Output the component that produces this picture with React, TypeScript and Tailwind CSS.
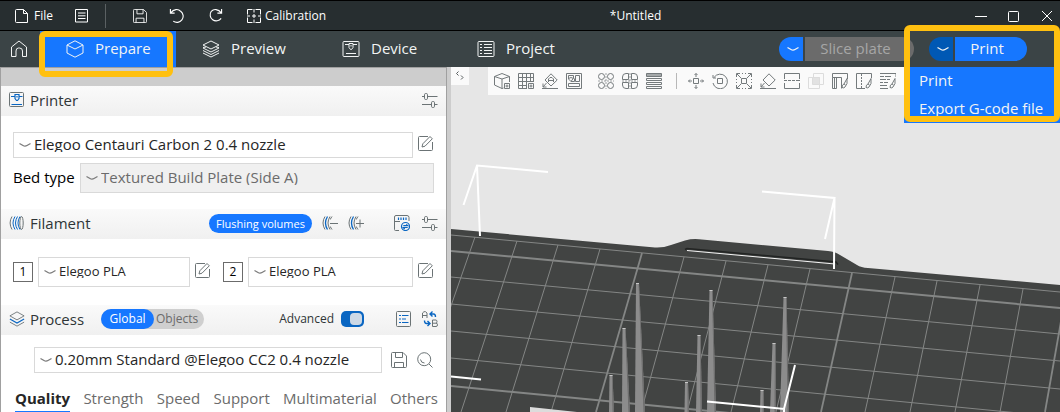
import { useState, type ReactNode } from "react";

type IconProps = { children: ReactNode; className?: string; box?: number };

function Icon({ children, className = "size-4", box = 16 }: IconProps) {
  return (
    <svg
      className={`shrink-0 ${className}`}
      viewBox={`0 0 ${box} ${box}`}
      fill="none"
      stroke="currentColor"
      strokeWidth={1}
      aria-hidden="true"
    >
      {children}
    </svg>
  );
}

/* ---------- shared drawings ---------- */

const chevron = <path d="M.5 4.500L4 6.500Q6 7.700 8 6.500L11.500 4.500" strokeWidth={1.300} />;

const pencil = (
  <>
    <path d="M10 1.500H1.500Q.5 1.500 .5 2.500V14.500Q.5 15.500 1.500 15.500H13.500Q14.500 15.500 14.500 14.500V7" />
    <path d="M4 12l.8-3.200L12 1.500l2.300 2.300L7 11.200z" />
  </>
);

const sliders = (
  <>
    <path d="M0 4.500H2.500M5.500 4.500H15.500M0 12.500H9.500M12.500 12.500H15.500" />
    <rect x="2.500" y="1.500" width="3" height="6" rx="1.200" />
    <rect x="9.500" y="9.500" width="3" height="6" rx="1.200" />
  </>
);

const layers = (
  <>
    <path d="M9 1L17 5L9 9L1 5z" />
    <path d="M1 7.500L4 7M17 7.500L14 7M1 8L9 12L17 8M1 10.500L9 14.500L17 10.500M1 13L9 17L17 13" />
  </>
);

const floppy = (
  <>
    <path d="M.5 1.500Q.5 .5 1.500 .5H12L15.500 4V14.500Q15.500 15.500 14.500 15.500H1.500Q.5 15.500 .5 14.500z" />
    <path d="M4.500 .5V5.500H11.500V.5M3.500 15.500V10.500H12.500V15.500" />
  </>
);

const brush = <path d="M10 14.500q0-3 2-3.500l3-5.500v5l-2 3.500q-1 1.500-3 .5zM12 11l1.500 1" />;

/* ---------- title bar ---------- */

function TitleBar() {
  return (
    <header className="flex h-[31px] items-center border-y border-black bg-[#272e30] text-[12px] text-white">
      <button className="ml-[15px] flex items-center gap-[5px]">
        <Icon className="size-[14px]" box={14}>
          <path d="M1.500 .5H8.500L12.500 4.500V13.500H1.500Q.5 13.500 .5 12.500V1.500Q.5 .5 1.500 .5zM8.500 .5V4.500H12.500" />
        </Icon>
        File
      </button>
      <button className="ml-[22px]" aria-label="Menu">
        <Icon className="size-[14px]" box={14}>
          <path d="M.5 .5H12.500V13H.5zM3 4H10.500M3 6.800H10.500M3 9.500H10.500" />
        </Icon>
      </button>
      <span className="ml-4 h-6 w-px bg-[#5b6163]" />
      <button className="ml-[27px]" aria-label="Save">
        <Icon className="size-[14px]">{floppy}</Icon>
      </button>
      <button className="ml-[22px]" aria-label="Undo">
        <Icon className="size-[15px]">
          <path d="M1.500 1V5.500H6M1.800 5.200C5 .8 10 .8 12.500 3.500A6.200 6.200 0 0 1 4.500 14" strokeWidth={1.200} />
        </Icon>
      </button>
      <button className="ml-[24px]" aria-label="Redo">
        <Icon className="size-[15px]">
          <path d="M14.500 1V5.500H10M14.200 5.200C11 .8 6 .8 3.500 3.500A6.200 6.200 0 1 0 14 11" strokeWidth={1.200} />
        </Icon>
      </button>
      <button className="ml-[24px] flex items-center gap-1">
        <Icon className="size-[14px]" box={14}>
          <path d="M5.500 .5H.5V5.500M8.500 .5H13.500V5.500M.5 8.500V13.500H5.500M13.500 8.500V13.500H8.500M7 0V3.500M7 10.500V14M0 7H3M11 7H14M5 7H9M7 5V9" />
        </Icon>
        Calibration
      </button>
      <span className="flex-1 pr-[30px] text-center">*Untitled</span>
      <div className="flex items-center gap-[21px] pr-[7px]">
        <button aria-label="Minimize">
          <Icon className="size-3" box={12}><path d="M0 6.500H12" /></Icon>
        </button>
        <button aria-label="Maximize">
          <Icon className="size-3" box={12}><rect x=".5" y="1.500" width="10" height="10" rx="1" /></Icon>
        </button>
        <button aria-label="Close">
          <Icon className="size-3" box={12}><path d="M1 1L11 11M11 1L1 11" /></Icon>
        </button>
      </div>
    </header>
  );
}

/* ---------- main navigation ---------- */

const tabs = [
  {
    label: "Prepare",
    width: "w-[136px]",
    icon: <path d="M9 .8L17 5V13L9 17.200L1 13V5zM1 5L9 9L17 5" />,
  },
  { label: "Preview", width: "w-[140px]", icon: layers },
  {
    label: "Device",
    width: "w-[135px]",
    icon: (
      <>
        <rect x="1" y="1.500" width="16" height="15" rx="1" />
        <path d="M3 4.500H7M11 4.500H15M4 13.500H14M7 3.500H11V7.500L9.500 9.500H8.500L7 7.500zM9 5V6.500" />
      </>
    ),
  },
  {
    label: "Project",
    width: "w-[135px]",
    icon: (
      <>
        <rect x="1" y="1.500" width="16" height="15" rx="1" />
        <path d="M3 4.500H5M7 4.500H15M3 7.500H5M7 7.500H15M3 10.500H5M7 10.500H15M3 13.500H5M7 13.500H15" />
      </>
    ),
  },
];

function NavBar() {
  const [active, setActive] = useState("Prepare");
  return (
    <nav className="relative z-10 flex h-9 items-stretch bg-[#3b4446] text-[15px] text-[#f2f4f4]">
      <button className="w-10 pl-[10px]" aria-label="Home">
        <Icon className="size-[18px]" box={18}>
          <path d="M1.500 7L9 1L16.500 7V16.500H12.500V11Q12.500 8 9.500 8H8.500Q6 8 6 11V16.500H1.500z" />
        </Icon>
      </button>
      {tabs.map((tab) => (
        <button
          key={tab.label}
          onClick={() => setActive(tab.label)}
          className={`relative flex items-center gap-[11px] pb-px pl-[26px] ${tab.width} ${active === tab.label ? "bg-[#1677ff]" : ""}`}
        >
          <Icon className="size-[18px]" box={18}>{tab.icon}</Icon>
          {tab.label}
          {tab.label === "Prepare" && (
            <span className="absolute top-0 -left-px h-[46px] w-[134px] rounded-md border-6 border-[#ffc010]" />
          )}
        </button>
      ))}
      <div className="ml-auto flex items-center gap-[15px] pr-[33px]">
        <div className="flex h-6 gap-[2px]">
          <button className="flex w-6 items-center justify-center rounded-l-full bg-[#1677ff] pl-1" aria-label="Slice options">
            <Icon className="size-3" box={12}>{chevron}</Icon>
          </button>
          <button className="w-[109px] rounded-r-full bg-[#6b6b6b] pr-2 pb-px text-[#a6a6a6]" disabled>
            Slice plate
          </button>
        </div>
        <div className="flex h-6 gap-[2px]">
          <button className="flex w-6 items-center justify-center rounded-l-full bg-[#0058b4] pl-1" aria-label="Print options">
            <Icon className="size-3" box={12}>{chevron}</Icon>
          </button>
          <button className="w-[72px] rounded-r-full bg-[#1677ff] pr-2 pb-px">Print</button>
        </div>
      </div>
      <div className="absolute top-9 right-0 flex h-14 w-[156px] flex-col bg-[#1677ff] pl-[15px]">
        <button className="h-7 pb-[2px] text-left">Print</button>
        <button className="h-7 pb-[2px] text-left whitespace-nowrap">Export G-code file</button>
      </div>
      <span className="pointer-events-none absolute -top-[6px] right-0 h-[97px] w-[156px] rounded-md border-6 border-[#ffc010]" />
    </nav>
  );
}

/* ---------- sidebar ---------- */

type PickerProps = { label: string; value: string; className?: string; disabled?: boolean };

function Picker({ label, value, className = "", disabled }: PickerProps) {
  return (
    <div className={`relative ${className}`}>
      <select
        aria-label={label}
        disabled={disabled}
        className="size-full appearance-none border border-[#d9d9d9] bg-white pb-[2px] pl-5 text-[#262626] disabled:bg-[#f0f0f0] disabled:text-[#6b6b6b] disabled:opacity-100"
      >
        <option>{value}</option>
      </select>
      <span className="pointer-events-none absolute inset-y-0 left-[6px] flex items-center text-[#7c7c7c]">
        <Icon className="size-3" box={12}>{chevron}</Icon>
      </span>
    </div>
  );
}

function SectionHeader({ icon, title, children }: { icon: ReactNode; title: string; children: ReactNode }) {
  return (
    <div className="flex h-[30px] items-center bg-linear-to-b from-[#fafafa] to-[#f0f0f0] pr-2 pb-[2px] pl-2 text-[#6b7375]">
      {icon}
      <h2 className="ml-[5px] text-[15px] text-[#2f3537]">{title}</h2>
      {children}
    </div>
  );
}

function IconButton({ label, children, className = "" }: { label: string; children: ReactNode; className?: string }) {
  return (
    <button aria-label={label} className={`shrink-0 text-[#6b7375] ${className}`}>
      <Icon>{children}</Icon>
    </button>
  );
}

const printerIcon = (
  <Icon>
    <rect x=".5" y=".5" width="14" height="14" rx="1" />
    <path d="M2 4.500H6M10 4.500H13.500M2.500 12.500H13M6 2.500H10V6.500L8.500 8.500H7.500L6 6.500zM8 4V5.500" stroke="#0a66c2" strokeWidth={1.200} />
  </Icon>
);

const filamentIcon = (
  <Icon>
    <ellipse cx="12.500" cy="8" rx="1.700" ry="6.500" />
    <path d="M3 1.500Q-.8 8 3 14.500" />
    <path d="M6 1.500Q2 8 6 14.500M8.500 1.500Q4.500 8 8.500 14.500M11 1.500Q7 8 11 14.500" stroke="#0a66c2" />
  </Icon>
);

const processIcon = (
  <Icon box={18}>
    <path d="M9 1L17 5.500L9 10L1 5.500zM1 12.500L9 17L17 12.500" />
    <path d="M1 9L9 13.500L17 9" stroke="#0a66c2" strokeWidth={1.300} />
  </Icon>
);

const spool = (
  <>
    <path d="M3 1.500Q-1 8 3 14.500M8 1.500Q4 8 8 14.500" />
    <path d="M5.500 1.500Q1.500 8 5.500 14.500" stroke="#0a66c2" strokeWidth={1.300} />
    <path d="M10 1.500Q8.800 3 8.300 4.500M8.300 11.500Q8.800 13 10 14.500" />
  </>
);

function Filament({ slot, grow }: { slot: number; grow: string }) {
  return (
    <div className={`flex items-center ${grow}`}>
      <span className="flex size-5 items-center justify-center border border-[#6b6b6b] text-[12px] text-black">{slot}</span>
      <Picker label={`Filament ${slot}`} value="Elegoo PLA" className="ml-[5px] h-[30px] flex-1 text-[13px]" />
      <IconButton label={`Edit filament ${slot}`} className="ml-[5px] -mt-1">{pencil}</IconButton>
    </div>
  );
}

const settingTabs = ["Quality", "Strength", "Speed", "Support", "Multimaterial", "Others"];

function Sidebar() {
  const [advanced, setAdvanced] = useState(true);
  return (
    <aside className="w-[451px] shrink-0 border-r-4 border-[#cdcdcd] bg-white text-[15px]">
      <div className="h-full border-x border-[#a0a0a0]">
        <div className="h-[19px] border-t border-[#a0a0a0] bg-[#cdcdcd]" />
        <SectionHeader icon={printerIcon} title="Printer">
          <IconButton label="Printer settings" className="ml-auto">{sliders}</IconButton>
        </SectionHeader>
        <div className="flex flex-col gap-[5px] pt-4 pr-3 pl-3">
          <div className="flex items-center gap-[5px]">
            <Picker label="Printer" value="Elegoo Centauri Carbon 2 0.4 nozzle" className="h-[26px] flex-1" />
            <IconButton label="Edit printer" className="-mt-1">{pencil}</IconButton>
          </div>
          <div className="flex items-center gap-[5px]">
            <span className="w-[62px] pb-[2px] whitespace-nowrap text-black">Bed type</span>
            <Picker label="Bed type" value="Textured Build Plate (Side A)" className="h-[30px] flex-1" disabled />
          </div>
        </div>
        <div className="h-4" />
        <SectionHeader icon={filamentIcon} title="Filament">
          <button className="ml-auto h-[19px] w-[103px] rounded-full bg-[#1677ff] text-[11px] leading-none whitespace-nowrap text-white">
            Flushing volumes
          </button>
          <IconButton label="Remove filament" className="ml-[10px]">
            {spool}
            <path d="M8 8.500H16" />
          </IconButton>
          <IconButton label="Add filament" className="ml-[10px]">
            {spool}
            <path d="M8 8.500H16M12 4.500V12.500" />
          </IconButton>
          <IconButton label="Sync filaments" className="ml-[30px]">
            <path d="M5 15.500H1.500Q.5 15.500 .5 14.500V2Q.5 .5 2 .5H13Q15 .5 15 2.500V6M.5 6.500H6" />
            <g stroke="#0a66c2" strokeWidth={1.200}>
              <path d="M4.500 2.500V5M7 2.500V5M9.500 2.500V5M12 2.500V5" />
              <circle cx="11.500" cy="11.500" r="4" />
              <path d="M9.300 10.700H13.700L12.300 9.300M13.700 12.500H9.300L10.700 14" />
            </g>
          </IconButton>
          <IconButton label="Filament settings" className="ml-3">{sliders}</IconButton>
        </SectionHeader>
        <div className="flex gap-3 py-[18px] pr-3 pl-3">
          <Filament slot={1} grow="w-[198px]" />
          <Filament slot={2} grow="flex-1" />
        </div>
        <SectionHeader icon={processIcon} title="Process">
          <div className="ml-[17px] flex h-5 items-center rounded-full bg-[#cfcfcf] text-[12px]">
            <button className="h-5 w-[53px] rounded-full bg-[#1677ff] text-white">Global</button>
            <button className="w-[50px] pr-1 text-[#6b6b6b]">Objects</button>
          </div>
          <label htmlFor="advanced" className="ml-auto text-[12px] text-[#2f3537]">Advanced</label>
          <span className="relative ml-[7px] flex h-4 w-[23px]">
            <input
              id="advanced"
              type="checkbox"
              checked={advanced}
              onChange={(e) => setAdvanced(e.target.checked)}
              className="peer size-full appearance-none rounded-[5px] bg-[#a0a0a0] checked:bg-[#0a66c2]"
            />
            <span className="pointer-events-none absolute top-[2px] left-[2px] size-3 rounded-[4px] bg-[#cdd9e6] peer-checked:left-[9px]" />
          </span>
          <IconButton label="Parameter list" className="ml-8">
            <rect x=".5" y=".5" width="14" height="15" rx="1" />
            <path d="M3 4.500H5M6 4.500H12.500M3 8H5M6 8H10M3 11.500H5M6 11.500H12.500" stroke="#0a66c2" strokeWidth={1.200} />
          </IconButton>
          <IconButton label="Compare presets" className="ml-[10px]">
            <path d="M.5 7V2L2 .7H3.500L5 2V7M.5 4.500H5M10.500 9V15.500H14Q15.500 15.500 15.500 13.800T14 12.200H10.500M14 12.200Q15 12 15 10.600T14 9H10.500" />
            <path d="M10.500 .5L8 3L10.500 5.500M8.500 3H11.500Q13.500 3 13.500 6M5.500 10L8 12.500L5.500 15M7.500 12.500H4.500Q2.500 12.500 2.500 9.500" stroke="#0a66c2" strokeWidth={1.400} />
          </IconButton>
        </SectionHeader>
        <div className="flex items-center pt-3 pr-[13px] pl-[33px]">
          <Picker label="Process preset" value="0.20mm Standard @Elegoo CC2 0.4 nozzle" className="h-[26px] flex-1" />
          <IconButton label="Save preset" className="ml-[9px]">{floppy}</IconButton>
          <IconButton label="Search settings" className="ml-[10px]">
            <circle cx="7.200" cy="7.200" r="6.500" />
            <path d="M12 12L15.500 15.500M3.500 7.500Q4 11 7.500 11" />
          </IconButton>
        </div>
        <div className="flex justify-between pt-[14px] pr-2 pl-[14px] text-[#6b6b6b]" role="tablist">
          {settingTabs.map((name) => (
            <button
              key={name}
              role="tab"
              aria-selected={name === "Quality"}
              className={`h-[26px] border-b-2 pb-px ${name === "Quality" ? "border-[#1677ff] font-bold text-[#262626]" : "border-transparent"}`}
            >
              {name}
            </button>
          ))}
        </div>
      </div>
    </aside>
  );
}

/* ---------- 3D view ---------- */

const tools: { label: string; gap: string; faded?: boolean; icon: ReactNode }[] = [
  { label: "Add model", gap: "", icon: <path d="M9.500 15L8 15.500L.5 12V3.500L8 .5L15.500 3.500V9M.5 3.500L8 6L15.500 3.500M8 6V15.500M10.500 10.500H15.500V15.500H10.500zM13 11.500V14.500M11.500 13H14.500" /> },
  { label: "Add plate", gap: "ml-2", icon: <path d="M9 15.500H.5V.5H15.500V9M4.500 .5V15.500M8.500 .5V15.500M12.500 .5V9M.5 4.500H15.500M.5 8.500H15.500M.5 12.500H9M10.500 10.500H15.500V15.500H10.500zM13 11.500V14.500M11.500 13H14.500" /> },
  { label: "Auto orient", gap: "ml-2", icon: <path d="M9 .8L15.200 7L9 13L3 7zM6.500 9V6L8 4.500H10L11.500 6V9M6.500 7.500H11.500M0 15.500H16M4.500 10L1 14M1 10.500V14H4.500" /> },
  { label: "Arrange", gap: "ml-2", icon: <path d="M.5 .5H15.500V15.500H.5zM2.500 10.500H13.500V13.500H2.500zM9.500 2.500H13.500V8.500H9.500zM2.500 2.500H7.500V5L5 8.500L2.500 6zM5 8.500H8.500V5.500M2.500 5.500L5 4.500L7.500 5.500" /> },
  {
    label: "Split to objects",
    gap: "ml-4",
    icon: (
      <>
        <circle cx="3.500" cy="3.500" r="3" /><circle cx="12.500" cy="3.500" r="3" />
        <circle cx="3.500" cy="12.500" r="3" /><circle cx="12.500" cy="12.500" r="3" />
        <path d="M8 0V16M0 8H16" strokeDasharray="2 1" strokeWidth={0.700} />
      </>
    ),
  },
  {
    label: "Split to parts",
    gap: "ml-2",
    icon: (
      <>
        <path d="M6.500 .5V6.500H.5V4Q.5 .5 4 .5zM9.500 .5V6.500H15.500V4Q15.500 .5 12 .5zM6.500 15.500V9.500H.5V12Q.5 15.500 4 15.500zM9.500 15.500V9.500H15.500V12Q15.500 15.500 12 15.500z" />
        <path d="M8 0V16M0 8H16" strokeDasharray="2 1" strokeWidth={0.700} />
      </>
    ),
  },
  {
    label: "Variable layer height",
    gap: "ml-2",
    icon: (
      <>
        <path d="M.5 .5H15.500V3.500H.5z" fill="#a5a9aa" />
        <path d="M.5 5.500H15.500V7.500H.5zM.5 9.500H15.500V11.500H.5zM.5 13.500H15.500V15.500H.5z" />
      </>
    ),
  },
  { label: "Move", gap: "ml-[11px]", icon: <path d="M5.500 5.500H10.500V10.500H5.500zM8 4V.5M6.500 2L8 .5L9.500 2M8 12V15.500M6.500 14L8 15.500L9.500 14M4 8H.5M2 6.500L.5 8L2 9.500M12 8H15.500M14 6.500L15.500 8L14 9.500" /> },
  { label: "Rotate", gap: "ml-2", icon: <path d="M5.500 5.500H10.500V10.500H5.500zM1 2V5H4M2 4.500A7.300 7.300 0 1 1 1 10" /> },
  { label: "Scale", gap: "ml-2", icon: <path d="M5.500 5.500H10.500V10.500H5.500zM.5 4V.5H4M12 .5H15.500V4M.5 12V15.500H4M12 15.500H15.500V12M1 1L5 5M15 1L11 5M1 15L5 11M15 15L11 11M6 .5H7M9 .5H10M6 15.500H7M9 15.500H10M.5 6V7M.5 9V10M15.500 6V7M15.500 9V10" /> },
  { label: "Lay on face", gap: "ml-2", icon: <path d="M9 .8L15.200 7L9 13L3 7zM0 15.500H16M4.500 10L1 14M1 10.500V14H4.500" /> },
  { label: "Cut", gap: "ml-2", icon: <path d="M.5 6V.5H15.500V6M.5 10V15.500H15.500V10M0 7.500H3M4 7.500H7M8 7.500H11M12 7.500H16" /> },
  {
    label: "Boolean",
    gap: "ml-2",
    faded: true,
    icon: (
      <>
        <path d="M.5 4.500H11.500V15.500H.5zM5.500 .5H15.500V11.500H5.500z" />
        <path d="M4.500 4.500H11.500V11.500H4.500z" fill="#e2e2e2" />
      </>
    ),
  },
  { label: "Support painting", gap: "ml-2", icon: <><path d="M.5 .5H15.500V6M.5 .5V4.500H9.500V15.500M.5 4.500V15.500M2.500 4.500V15.500M4.500 4.500V15.500M.5 15.500H4.500" />{brush}</> },
  { label: "Seam painting", gap: "ml-2", icon: <><path d="M15.500 5V.5H.5V15.500H9" /><path d="M5.500 1V15" strokeDasharray="2 1" />{brush}</> },
  { label: "Fuzzy skin", gap: "ml-2", icon: <><path d="M0 .5H16V4M0 3.500H4M5 3.500H11M0 6.500H6M7 6.500H10M0 9.500H3M4 9.500H8M0 12.500H7M0 15.500H8" />{brush}</> },
];

const gridRows = [
  { y1: 235, y2: 292 },
  { y1: 251, y2: 308, major: true },
  { y1: 277, y2: 334 },
  { y1: 304, y2: 361 },
  { y1: 331, y2: 389 },
  { y1: 358, y2: 417 },
  { y1: 386, y2: 445, major: true },
];

const gridCols = [
  [475, 237, 414], [517, 241, 461], [558, 245, 506], [600, 249, 551], [642, 253, 596],
  [684, 257, 641], [726, 261, 687], [768, 265, 731], [810, 269, 776], [852, 273, 821],
  [895, 277, 865], [937, 281, 910], [980, 285, 955], [1023, 289, 1000], [1066, 293, 1045],
];

// tip x, tip y, left and right foot at the bottom edge
const spikes = [
  [637.500, 283, 635, 645], [624, 328, 622, 630], [611, 375, 609, 614],
  [711, 290, 707, 716], [699, 335, 696, 702], [686.500, 382, 684.500, 689],
  [785, 297, 780, 789], [774, 343, 770, 776], [762, 390, 760, 764],
];

function Scene() {
  return (
    <svg className="absolute inset-0 size-full" viewBox="451 67 609 345" preserveAspectRatio="xMinYMin slice" role="img" aria-label="Build plate">
      <path d="M451 229L655 247.500Q663 248 671 245L685 240.500Q692 238.500 699 239.200L828 251Q835 251.500 840 255L857 265Q861 267.500 868 268L1060 285V412H451z" fill="#424443" />
      <path d="M685 249.500L687 248.500L836 262L838 264.500" fill="none" stroke="#222423" strokeWidth={1.500} />
      <path d="M687 250.500L835 264" stroke="#f5f5f5" strokeWidth={1} />
      <g stroke="#848685">
        {gridRows.map((r) => (
          <line key={r.y1} x1={451} y1={r.y1} x2={1060} y2={r.y2} strokeWidth={r.major ? 2 : 1} />
        ))}
        {gridCols.map(([x, y, foot], i) => (
          <line key={x} x1={x} y1={y} x2={foot} y2={412} strokeWidth={i % 5 === 4 ? 1.800 : 1} />
        ))}
      </g>
      {spikes.map(([x, y, left, right]) => (
        <g key={x}>
          <path d={`M${x - 1.500} ${y}H${x + 1.500}L${right} 412H${left}z`} fill="#8c8c8c" />
          <path d={`M${x + 1} ${y}H${x + 1.500}L${right} 412H${right - 1.500}z`} fill="#6c6c6c" />
          <path d={`M${x - 1.500} ${y + 0.500}H${x + 1.500}`} stroke="#c8c8c8" />
        </g>
      ))}
      <path d="M530 407L577 412H530z" fill="#dcdcdc" />
      <g stroke="#fff" strokeWidth={2} fill="none">
        <path d="M548 172L477 165.500L463.500 205M477 165.500L480 236" />
        <path d="M762 191.500L834.500 198L825 239M834.500 198L834 269" />
        <path d="M451 376.500L481 379.500M707 401.500L784 409L795 365M784 409V412" />
      </g>
    </svg>
  );
}

function Viewport() {
  return (
    <main className="relative min-w-0 flex-1 overflow-hidden bg-[#e6e6e6]">
      <Scene />
      <div className="relative flex items-start justify-between">
        <button className="flex size-[18px] items-center justify-center bg-[#fafafa] text-[#555b5d]" aria-label="Collapse sidebar">
          <Icon className="size-3" box={12}>
            <path d="M4.500 1.500L2.500 3.500L4.500 5.500M7 5.500L9 7.500L7 9.500" />
          </Icon>
        </button>
        <div className="ml-[19px] flex h-7 flex-1 items-center overflow-hidden bg-[#fafafa] pl-[6px]">
          {tools.map((tool) => (
            <div key={tool.label} className="flex shrink-0 items-center">
              {tool.label === "Move" && <span className="ml-[14px] h-4 w-px bg-[#b8b8b8]" />}
              <button aria-label={tool.label} className={`${tool.gap} ${tool.faded ? "text-[#dcdcdc]" : "text-[#747a7c]"}`}>
                <Icon>{tool.icon}</Icon>
              </button>
            </div>
          ))}
        </div>
      </div>
    </main>
  );
}

export default function App() {
  return (
    <div className="flex h-screen flex-col overflow-hidden font-['Open_Sans','Noto_Sans',sans-serif] leading-none">
      <TitleBar />
      <NavBar />
      <div className="flex min-h-0 flex-1">
        <Sidebar />
        <Viewport />
      </div>
    </div>
  );
}
